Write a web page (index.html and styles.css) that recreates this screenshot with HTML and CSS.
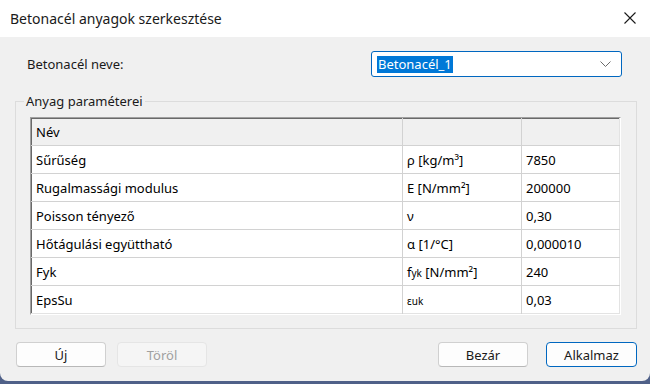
FILE: index.html
```html
<!DOCTYPE html>
<html lang="hu">
<head>
    <meta charset="UTF-8">
    <title>Betonacél anyagok szerkesztése</title>
    <link rel="stylesheet" href="styles.css">
</head>
<body>
    <div class="window">
        <div class="titlebar">
            <span class="title">Betonacél anyagok szerkesztése</span>
            <svg class="close" width="12" height="12" viewBox="0 0 12 12">
                <path d="M0.5 0.5 L11.5 11.5 M11.5 0.5 L0.5 11.5" stroke="#1a1a1a" stroke-width="1.1" fill="none"/>
            </svg>
        </div>

        <div class="content">
            <div class="name-row">
                <label for="steelName">Betonacél neve:</label>
                <div class="combo" id="steelName">
                    <span class="selected">Betonacél_1</span>
                    <svg class="chevron" width="11" height="6" viewBox="0 0 11 6">
                        <path d="M0.5 0.5 L5.5 5.5 L10.5 0.5" stroke="#6b6b6b" stroke-width="1" fill="none"/>
                    </svg>
                </div>
            </div>

            <div class="group">
                <span class="group-title">Anyag paraméterei</span>
                <div class="grid-outer">
                    <table class="grid">
                        <colgroup>
                            <col class="c-name">
                            <col class="c-unit">
                            <col class="c-value">
                        </colgroup>
                        <tr class="head">
                            <td>Név</td>
                            <td></td>
                            <td></td>
                        </tr>
                        <tr>
                            <td>Sűrűség</td>
                            <td>ρ [kg/m³]</td>
                            <td>7850</td>
                        </tr>
                        <tr>
                            <td>Rugalmassági modulus</td>
                            <td>E [N/mm²]</td>
                            <td>200000</td>
                        </tr>
                        <tr>
                            <td>Poisson tényező</td>
                            <td>ν</td>
                            <td>0,30</td>
                        </tr>
                        <tr>
                            <td>Hőtágulási együttható</td>
                            <td>α [1/°C]</td>
                            <td>0,000010</td>
                        </tr>
                        <tr>
                            <td>Fyk</td>
                            <td>f<span class="sub">yk</span> [N/mm²]</td>
                            <td>240</td>
                        </tr>
                        <tr>
                            <td>EpsSu</td>
                            <td><span class="tiny">εuk</span></td>
                            <td>0,03</td>
                        </tr>
                    </table>
                </div>
            </div>

            <div class="buttons">
                <button class="btn">Új</button>
                <button class="btn" disabled>Töröl</button>
                <span class="spacer"></span>
                <button class="btn">Bezár</button>
                <button class="btn default">Alkalmaz</button>
            </div>
        </div>
    </div>
</body>
</html>
```

FILE: styles.css
```css
body {
    margin: 0;
    background-color: #4f6088;
    font-family: "Noto Sans", "Open Sans", sans-serif;
    color: #1a1a1a;
}
.window {
    width: 650px;
    height: 381px;
    background-color: #f0f0f0;
    border-radius: 0 0 8px 8px;
    overflow: hidden;
}
.titlebar {
    height: 37px;
    background-color: #ffffff;
    display: flex;
    align-items: center;
    padding: 0 14px 0 10px;
}
.title {
    font-size: 14px;
    flex: 1;
}
.close {
    margin-top: -1px;
}
.content {
    padding: 14px 13px 0 15px;
}
.name-row {
    display: flex;
    align-items: center;
    height: 26px;
}
.name-row label {
    font-size: 13px;
    padding-left: 12px;
    flex: 1;
}
.combo {
    width: 251px;
    height: 26px;
    box-sizing: border-box;
    margin-right: 15px;
    background-color: #ffffff;
    border: 1px solid #0067c0;
    border-radius: 3px;
    display: flex;
    align-items: center;
    padding: 0 10px 0 5px;
}
.selected {
    flex: 1;
    font-size: 13px;
    line-height: 17px;
    background: linear-gradient(#0078d7, #0078d7) no-repeat;
    background-size: 76px 17px;
    color: #ffffff;
    padding-left: 1px;
}
.group {
    position: relative;
    margin-top: 24px;
    height: 228px;
    box-sizing: border-box;
    border: 1px solid #dcdcdc;
    padding: 15px 15px 0 14px;
}
.group-title {
    position: absolute;
    top: -10px;
    left: 8px;
    padding: 0 2px;
    background-color: #f0f0f0;
    font-size: 13px;
    line-height: 18px;
}
.grid-outer {
    border: 1px solid;
    border-color: #a0a0a0 #ffffff #ffffff #a0a0a0;
}
.grid {
    width: 100%;
    border-collapse: collapse;
    table-layout: fixed;
    border: 1px solid;
    border-color: #696969 #e3e3e3 #e3e3e3 #696969;
    font-size: 13px;
    color: #000000;
}
.c-name {
    width: 371px;
}
.c-unit {
    width: 119px;
}
.grid td {
    height: 27px;
    padding: 0 0 0 4px;
    border: 1px solid #d2d2d2;
    white-space: nowrap;
    background-color: #ffffff;
}
.grid tr:first-child td {
    border-top: none;
}
.grid td:first-child {
    border-left: none;
}
.grid td:last-child {
    border-right: none;
}
.grid tr:last-child td {
    border-bottom: none;
}
.grid .head td {
    background-color: #f0f0f0;
    height: 26px;
}
.sub {
    font-size: 10px;
}
.tiny {
    font-size: 10px;
}
.buttons {
    display: flex;
    margin-top: 13px;
    padding-left: 1px;
    gap: 11px;
}
.spacer {
    flex: 1;
}
.btn {
    width: 90px;
    height: 25px;
    font-family: inherit;
    font-size: 13px;
    color: #1a1a1a;
    background-color: #fdfdfd;
    border: 1px solid #d0d0d0;
    border-bottom-color: #b8b8b8;
    border-radius: 4px;
    padding: 0;
}
.btn:disabled {
    background-color: #f5f5f5;
    border-color: #e5e5e5;
    color: #a0a0a0;
}
.default {
    border: 1px solid #0067c0;
    width: 91px;
    margin-left: 7px;
}
```
